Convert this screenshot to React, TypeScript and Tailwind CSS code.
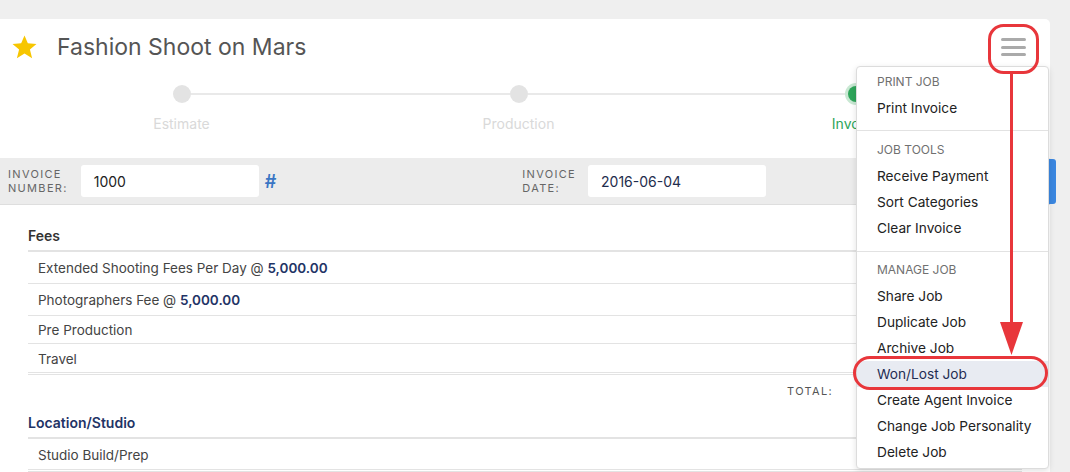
const font = { fontFamily: 'Inter, "Noto Sans", sans-serif' };

function Star() {
  return (
    <svg width="25" height="24" viewBox="0 0 24 23" className="shrink-0">
      <polygon
        points="12,0.5 15.2,8 23.5,8.5 17.2,14 19.3,22.3 12,17.8 4.7,22.3 6.8,14 0.5,8.5 8.8,8"
        fill="#f7c600"
      />
    </svg>
  );
}

const steps = [
  { label: 'Estimate', done: false },
  { label: 'Production', done: false },
  { label: 'Invoice', done: true },
];

function Steps() {
  return (
    <div className="ml-[13px] grid w-[1011px] grid-cols-3 pt-[8px]">
      {steps.map((s, i) => (
        <div key={s.label} className="flex flex-col items-center">
          <div className="flex h-[22px] w-full items-center">
            <div className={`h-[2px] flex-1 ${i === 0 ? '' : 'bg-[#e9e9e9]'}`} />
            {s.done ? (
              <div className="flex h-[22px] w-[22px] items-center justify-center rounded-full bg-[#c9e8d3]">
                <div className="h-[16px] w-[16px] rounded-full bg-[#2ea55a]" />
              </div>
            ) : (
              <div className="h-[18px] w-[18px] rounded-full bg-[#e3e3e3]" />
            )}
            <div className={`h-[2px] flex-1 ${i === steps.length - 1 ? '' : 'bg-[#e9e9e9]'}`} />
          </div>
          <div
            className={`mt-[9px] text-[14px] leading-[20px] ${s.done ? 'text-[#2ea55a]' : 'text-[#d9d9d9]'}`}
          >
            {s.label}
          </div>
        </div>
      ))}
    </div>
  );
}

function FieldLabel({ a, b }: { a: string; b: string }) {
  return (
    <div className="text-[11px] leading-[14px] tracking-[0.12em] text-[#666]">
      <div>{a}</div>
      <div>{b}</div>
    </div>
  );
}

function Row({ children, h, last }: { children: React.ReactNode; h: string; last?: boolean }) {
  return (
    <div
      className={`flex items-center pl-[10px] pt-[2px] text-[13.5px] text-[#444] ${h} ${last ? '' : 'border-b border-[#e3e3e3]'}`}
    >
      {children}
    </div>
  );
}

const menu = [
  { title: 'Print Job', items: ['Print Invoice'], pt: 'pt-[5px]', pb: 'pb-[9px]' },
  { title: 'Job Tools', items: ['Receive Payment', 'Sort Categories', 'Clear Invoice'], pt: 'pt-[9px]', pb: 'pb-[10px]' },
  {
    title: 'Manage Job',
    items: ['Share Job', 'Duplicate Job', 'Archive Job', 'Won/Lost Job', 'Create Agent Invoice', 'Change Job Personality', 'Delete Job'],
    pt: 'pt-[8px]',
    pb: 'pb-[3px]',
  },
];

function Menu() {
  return (
    <div className="absolute right-[1px] top-[47px] w-[193px] rounded-[4px] border border-[#dcdcdc] bg-white shadow-[0_2px_6px_rgba(0,0,0,0.12)]">
      {menu.map((sec, i) => (
        <div key={sec.title} className={`${sec.pt} ${sec.pb} ${i > 0 ? 'border-t border-[#e2e2e2]' : ''}`}>
          <div className="mb-[3px] pl-[20px] text-[12px] uppercase leading-[20px] text-[#707070]">{sec.title}</div>
          {sec.items.map((it) => (
            <div
              key={it}
              className={`pl-[20px] text-[13.7px] leading-[26px] ${it === 'Won/Lost Job' ? 'bg-[#e8ebf2] text-[#1f2d52]' : 'text-[#222]'}`}
            >
              {it}
            </div>
          ))}
        </div>
      ))}
    </div>
  );
}

function Annotations() {
  return (
    <svg className="pointer-events-none absolute left-0 top-0" width="1070" height="472">
      <rect x="989.5" y="25.5" width="48" height="47" rx="14" fill="none" stroke="#e8363b" strokeWidth="3" />
      <line x1="1011.5" y1="73" x2="1011.5" y2="326" stroke="#e8363b" strokeWidth="3" />
      <polygon points="1000,322 1023,322 1011.5,355" fill="#e8363b" />
      <rect x="854.5" y="357.5" width="192" height="31" rx="15.5" fill="none" stroke="#e8363b" strokeWidth="3" />
    </svg>
  );
}

export default function App() {
  return (
    <div className="relative h-[472px] w-[1070px] overflow-hidden bg-[#efefef] pt-[19px]" style={font}>
      <div className="relative w-[1050px] rounded-tr-[5px] bg-white">
        <div className="flex h-[56px] items-center pl-[12px] pr-[24px]">
          <Star />
          <div className="ml-[20px] text-[23px] text-[#555]">Fashion Shoot on Mars</div>
          <div className="ml-auto flex w-[25px] flex-col gap-[4.5px]">
            <div className="h-[3px] rounded-full bg-[#aaa]" />
            <div className="h-[3px] rounded-full bg-[#aaa]" />
            <div className="h-[3px] rounded-full bg-[#aaa]" />
          </div>
        </div>
        <div className="h-[83px]">
          <Steps />
        </div>
        <div className="flex h-[47px] items-center border-b border-[#dedede] bg-[#ececec] pl-[8px]">
          <FieldLabel a="INVOICE" b="NUMBER:" />
          <div className="ml-[13px] flex h-[32px] w-[178px] items-center rounded-[3px] bg-white pl-[13px] text-[14px] text-[#222]">
            1000
          </div>
          <div className="ml-[6px] text-[18px] font-semibold text-[#3a76c4]">#</div>
          <div className="ml-[246px]">
            <FieldLabel a="INVOICE" b="DATE:" />
          </div>
          <div className="ml-[12px] flex h-[32px] w-[178px] items-center rounded-[3px] bg-white pl-[13px] text-[14px] text-[#1f2d4d]">
            2016-06-04
          </div>
          <div className="-mr-[6px] ml-auto h-[45px] w-[80px] rounded-[3px] bg-[#3b87e0]" />
        </div>
        <div className="px-[28px] pt-[16px]">
          <div className="flex h-[31px] items-center border-b-2 border-[#e3e3e3] text-[14px] font-semibold text-[#333]">
            Fees
          </div>
          <div className="flex flex-col border-b-[3px] border-double border-[#e3e3e3]">
            <Row h="h-[32px]">
              Extended Shooting Fees Per Day @&nbsp;<b className="font-semibold text-[#1f3466]">5,000.00</b>
            </Row>
            <Row h="h-[32px]">
              Photographers Fee @&nbsp;<b className="font-semibold text-[#1f3466]">5,000.00</b>
            </Row>
            <Row h="h-[28px]">Pre Production</Row>
            <Row h="h-[28px]" last>
              Travel
            </Row>
          </div>
          <div className="flex h-[32px] items-center justify-end pr-[189px] text-[11px] tracking-[0.12em] text-[#555]">
            TOTAL:
          </div>
          <div className="flex h-[32px] items-center border-b-2 border-[#e3e3e3] text-[14px] font-semibold text-[#1f3466]">
            Location/Studio
          </div>
          <div className="border-b-[3px] border-double border-[#e3e3e3]">
            <Row h="h-[30px]" last>
              Studio Build/Prep
            </Row>
          </div>
        </div>
        <Menu />
      </div>
      <Annotations />
    </div>
  );
}
